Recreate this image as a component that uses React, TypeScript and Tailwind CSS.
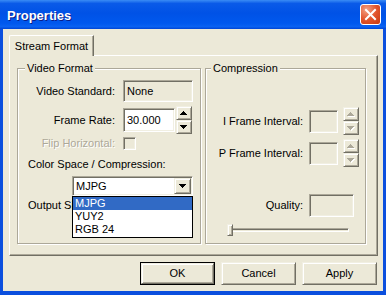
import React from "react";

const raised =
  "border border-[#f1efe2] border-r-[#716f64] border-b-[#716f64] shadow-[inset_1px_1px_#fff,inset_-1px_-1px_#aca899] bg-[#ece9d8]";
const sunken =
  "border border-[#aca899] border-r-white border-b-white shadow-[inset_1px_1px_#716f64,inset_-1px_-1px_#f1efe2]";
const groupBox =
  "border border-[#aca899] shadow-[inset_1px_1px_#fff,1px_1px_#fff] flex flex-col";
const disabledText = "text-[#aca899] [text-shadow:1px_1px_0_#fff]";

function Arrow({ up, disabled }: { up?: boolean; disabled?: boolean }) {
  const pts = up ? "3.5,0 7,4 0,4" : "0,0 7,0 3.5,4";
  return (
    <svg width="8" height="5" shapeRendering="crispEdges">
      {disabled && <polygon points={pts} fill="#fff" transform="translate(1,1)" />}
      <polygon points={pts} fill={disabled ? "#aca899" : "#000"} />
    </svg>
  );
}

function Spin({ disabled, className = "" }: { disabled?: boolean; className?: string }) {
  return (
    <div className={`flex flex-col w-[16px] ${className}`}>
      <div className={`${raised} h-[14px] flex items-center justify-center`}>
        <Arrow up disabled={disabled} />
      </div>
      <div className={`${raised} h-[14px] flex items-center justify-center`}>
        <Arrow disabled={disabled} />
      </div>
    </div>
  );
}

function Button({ label, primary }: { label: string; primary?: boolean }) {
  if (primary) {
    return (
      <div className="w-[75px] h-[23px] border border-black flex">
        <div className={`${raised} flex-1 flex items-center justify-center`}>{label}</div>
      </div>
    );
  }
  return (
    <div className={`${raised} w-[75px] h-[23px] flex items-center justify-center`}>{label}</div>
  );
}

const options = ["MJPG", "YUY2", "RGB 24"];

export default function App() {
  return (
    <div className="w-[386px] h-[295px] flex flex-col bg-[#0b4fde] font-['Liberation_Sans',Arial,sans-serif] text-[11px] leading-[13px] text-black select-none">
      {/* title bar */}
      <div className="h-[29px] shrink-0 flex items-center justify-between pl-[7px] pr-[5px] bg-[linear-gradient(180deg,#3a8cf5_0%,#0a5ae8_12%,#0052e6_45%,#0058ee_80%,#0a62f2_92%,#0044d4_100%)]">
        <span className="font-bold text-[13px] text-white pt-[1px] [text-shadow:1px_1px_0_#0a1e8a]">
          Properties
        </span>
        <div className="w-[21px] h-[21px] rounded-[3px] border border-white bg-[radial-gradient(circle_at_30%_25%,#f3a184,#e2552d_50%,#c7380f)] flex items-center justify-center">
          <svg width="13" height="13" viewBox="0 0 13 13">
            <path d="M2 2L11 11M11 2L2 11" stroke="#fff" strokeWidth="2" strokeLinecap="square" />
          </svg>
        </div>
      </div>

      {/* body */}
      <div className="flex-1 mx-[3px] mb-[4px] bg-[#ece9d8] pt-[6px] pl-[6px] pr-[6px] flex flex-col">
        <div className="relative z-10 -mb-[1px] w-[85px] h-[21px] border-l border-t border-white border-r border-r-[#716f64] rounded-tl-[2px] shadow-[inset_-1px_0_#aca899] bg-[#ece9d8] flex items-center justify-center">
          Stream Format
        </div>

        <div className="w-[369px] h-[201px] border border-white border-r-[#716f64] border-b-[#716f64] shadow-[inset_-1px_-1px_#aca899] pt-[12px] pl-[7px] flex gap-[4px]">
          {/* Video Format */}
          <div className={`${groupBox} w-[184px] h-[176px]`}>
            <span className="-mt-[7px] ml-[7px] px-[2px] bg-[#ece9d8] w-fit">Video Format</span>

            <div className="mt-[5px] flex items-center">
              <span className="w-[97px] text-right">Video Standard:</span>
              <div className={`${sunken} ml-[8px] w-[70px] h-[22px] flex items-center pl-[3px]`}>
                None
              </div>
            </div>

            <div className="mt-[4px] flex items-center">
              <span className="w-[97px] text-right">Frame Rate:</span>
              <div className={`${sunken} ml-[8px] w-[52px] h-[24px] bg-white flex items-center pl-[3px]`}>
                30.000
              </div>
              <Spin className="ml-[1px]" />
            </div>

            <div className="mt-[3px] flex items-center">
              <span className={`w-[97px] text-right ${disabledText}`}>Flip Horizontal:</span>
              <div className={`${sunken} ml-[8px] w-[13px] h-[13px]`} />
            </div>

            <span className="mt-[8px] pl-[10px]">Color Space / Compression:</span>

            <div className="relative mt-[5px] ml-[54px] w-[121px] h-[20px]">
              <div className={`${sunken} w-full h-full bg-white flex items-center justify-between pl-[3px] pr-[1px]`}>
                <span>MJPG</span>
                <div className={`${raised} w-[17px] h-[16px] flex items-center justify-center`}>
                  <Arrow />
                </div>
              </div>
              <div className="absolute z-20 left-0 top-full w-[121px] border border-black bg-white pb-[1px] flex flex-col">
                {options.map((o, i) => (
                  <div
                    key={o}
                    className={`h-[13px] pl-[2px] flex items-center ${i === 0 ? "bg-[#316ac5] text-white" : ""}`}
                  >
                    {o}
                  </div>
                ))}
              </div>
            </div>

            {/* label partly hidden behind the open list */}
            <span className="mt-[3px] ml-[10px] w-[44px] overflow-hidden whitespace-nowrap">
              Output Size:
            </span>
          </div>

          {/* Compression */}
          <div className={`${groupBox} w-[161px] h-[176px]`}>
            <span className="-mt-[7px] ml-[5px] px-[2px] bg-[#ece9d8] w-fit">Compression</span>

            <div className="mt-[32px] flex items-center">
              <span className="w-[97px] text-right">I Frame Interval:</span>
              <div className={`${sunken} ml-[6px] w-[29px] h-[23px]`} />
              <Spin disabled className="ml-[5px]" />
            </div>

            <div className="mt-[4px] flex items-center">
              <span className="w-[97px] text-right">P Frame Interval:</span>
              <div className={`${sunken} ml-[6px] w-[29px] h-[23px]`} />
              <Spin disabled className="ml-[5px]" />
            </div>

            <div className="mt-[27px] flex items-center">
              <span className="w-[97px] text-right">Quality:</span>
              <div className={`${sunken} ml-[6px] w-[45px] h-[23px]`} />
            </div>

            <div className="mt-[7px] ml-[21px] relative w-[122px] h-[12px] flex items-center">
              <div className="w-full h-[4px] border border-[#aca899] border-r-white border-b-white shadow-[inset_1px_1px_#716f64]" />
              <div className={`${raised} absolute left-0 top-0 w-[6px] h-[12px]`} />
            </div>
          </div>
        </div>

        <div className="mt-[6px] flex justify-end gap-[6px]">
          <Button label="OK" primary />
          <Button label="Cancel" />
          <Button label="Apply" />
        </div>
      </div>
    </div>
  );
}
